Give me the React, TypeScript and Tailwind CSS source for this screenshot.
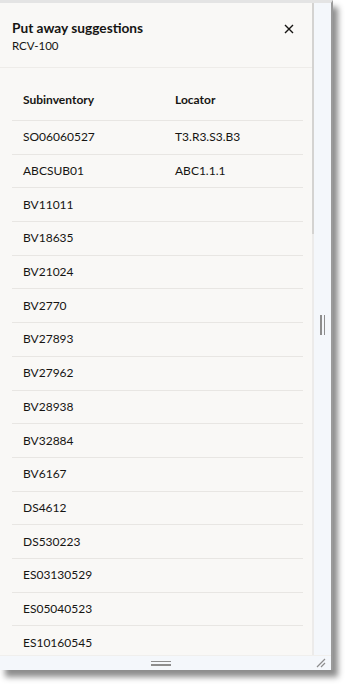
const rows: [string, string][] = [
  ["SO06060527", "T3.R3.S3.B3"],
  ["ABCSUB01", "ABC1.1.1"],
  ["BV11011", ""],
  ["BV18635", ""],
  ["BV21024", ""],
  ["BV2770", ""],
  ["BV27893", ""],
  ["BV27962", ""],
  ["BV28938", ""],
  ["BV32884", ""],
  ["BV6167", ""],
  ["DS4612", ""],
  ["DS530223", ""],
  ["ES03130529", ""],
  ["ES05040523", ""],
  ["ES10160545", ""],
];

export default function App() {
  return (
    <div
      className="w-[345px] h-[685px] bg-white overflow-hidden text-[#161513]"
      style={{ fontFamily: "Lato, 'Noto Sans', sans-serif" }}
    >
      {/* Dialog window */}
      <div className="w-[333px] h-[670px] flex flex-col bg-[#f4f7fb] border-t-[3px] border-t-[#e4e4e4] border-r-2 border-r-[#9a9a9a] shadow-[5px_7px_6px_rgba(0,0,0,0.45)]">
        <div className="flex flex-1 min-h-0">
          {/* Content */}
          <div className="w-[312px] bg-[#f9f8f6] flex flex-col overflow-hidden">
            {/* Header */}
            <div className="h-[65px] shrink-0 flex items-start justify-between pl-3 pr-[18px] pt-[16px] border-b border-[#eeece9]">
              <div>
                <div className="text-[13.7px] font-bold leading-[18px]">Put away suggestions</div>
                <div className="text-[11.5px] leading-[16px] mt-[1px]">RCV-100</div>
              </div>
              <svg width="10" height="10" viewBox="0 0 10 10" className="mt-[5px]">
                <path d="M1 1L9 9M9 1L1 9" stroke="#161513" strokeWidth="1.4" />
              </svg>
            </div>

            {/* Table */}
            <div className="px-3 pr-[9px]">
              <div className="h-[53px] flex items-end pb-[11px] border-b border-[#e8e6e3] text-[12px] font-bold">
                <div className="w-[163px] pl-[11px]">Subinventory</div>
                <div>Locator</div>
              </div>
              {rows.map(([sub, loc]) => (
                <div
                  key={sub}
                  className="h-[33.7px] flex items-center border-b border-[#e8e6e3] text-[12px]"
                >
                  <div className="w-[163px] pl-[11px]">{sub}</div>
                  <div>{loc}</div>
                </div>
              ))}
            </div>
          </div>

          {/* Scrollbar */}
          <div className="w-[2px] bg-[#ecebea] flex flex-col">
            <div className="h-[231px] bg-[#d4d3d1]" />
          </div>

          {/* Right resize strip */}
          <div className="flex-1 flex items-center pl-[6px]">
            <div className="flex gap-[2px] mt-[-8px]">
              <div className="w-[1.5px] h-[20px] bg-[#8d8d8d]" />
              <div className="w-[1.5px] h-[20px] bg-[#8d8d8d]" />
            </div>
          </div>
        </div>

        {/* Bottom resize strip */}
        <div className="h-[15px] relative flex justify-center items-center border-t border-[#f0efed]">
          <div className="flex flex-col gap-[2px] ml-[-10px]">
            <div className="w-[20px] h-[1.5px] bg-[#8d8d8d]" />
            <div className="w-[20px] h-[1.5px] bg-[#8d8d8d]" />
          </div>
          <svg width="12" height="12" viewBox="0 0 12 12" className="absolute right-[5px] bottom-[2px]">
            <path d="M11 3L3 11M11 7L7 11" stroke="#8d8d8d" strokeWidth="1.2" />
          </svg>
        </div>
      </div>
    </div>
  );
}
